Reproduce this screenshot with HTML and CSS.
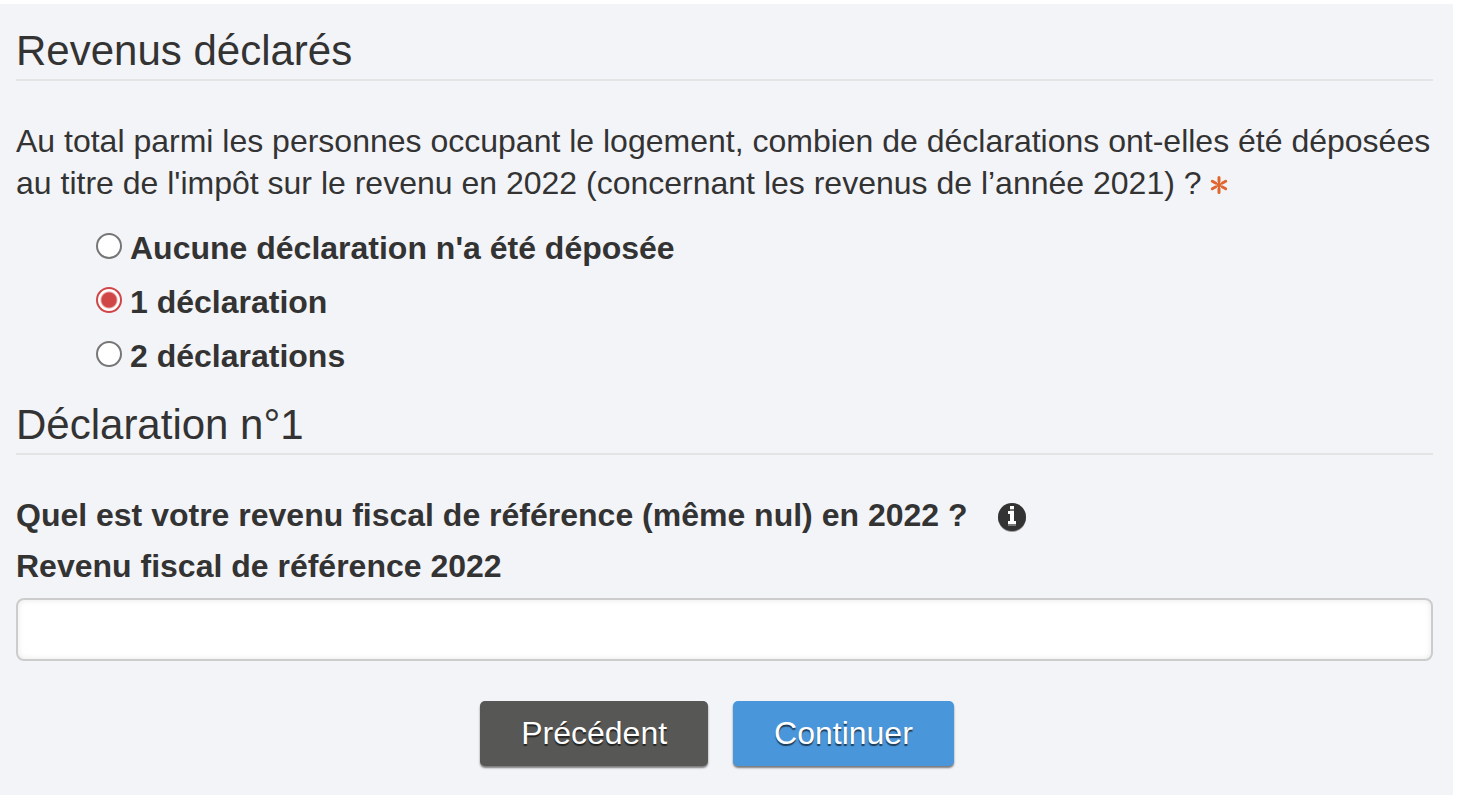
FILE: index.html
```html
<!DOCTYPE html>
<html lang="fr">
<head>
<meta charset="utf-8">
<title>Revenus déclarés</title>
<link rel="stylesheet" href="styles.css">
</head>
<body>
<form class="panel">
  <h2 class="title">Revenus déclarés</h2>
  <fieldset class="question">
    <legend class="prompt">Au total parmi les personnes occupant le logement, combien de déclarations ont-elles été déposées au titre de l'impôt sur le revenu en 2022 (concernant les revenus de l’année 2021) ? <svg class="required" viewBox="0 0 18 18" role="img" aria-label="obligatoire"><path d="M9 1v16M2 5l14 8M2 13l14-8"/><path class="tips" d="M9 1.500v4M9 12.500v4M2.300 5.200l3.200 1.800M15.700 5.200l-3.200 1.800M2.300 12.800l3.200-1.800M15.700 12.800l-3.200-1.800"/></svg></legend>
    <div class="options">
      <label class="option"><input class="radio" type="radio" name="declarations" value="0"><span>Aucune déclaration n'a été déposée</span></label>
      <label class="option"><input class="radio" type="radio" name="declarations" value="1" checked><span>1 déclaration</span></label>
      <label class="option"><input class="radio" type="radio" name="declarations" value="2"><span>2 déclarations</span></label>
    </div>
  </fieldset>
  <h2 class="title">Déclaration n°1</h2>
  <div class="income">
    <p class="income-question">Quel est votre revenu fiscal de référence (même nul) en 2022 ? <button class="info" type="button" aria-label="Information"><svg viewBox="0 0 28 30"><circle class="halo" cx="14" cy="16" r="14"/><circle class="disc" cx="14" cy="15" r="14"/><path class="shade" d="M12 7h4v2h-4zM10 22h8v2h-8z"/><path class="letter" d="M12 4h4v3h-4zM10 9h6v10h2v3h-8v-3h2v-7h-2z"/></svg></button></p>
    <label class="field-label" for="rfr">Revenu fiscal de référence 2022</label>
    <input class="field" id="rfr" type="text">
  </div>
  <div class="actions">
    <button class="btn btn-dark" type="button">Précédent</button>
    <button class="btn btn-blue" type="submit">Continuer</button>
  </div>
</form>
</body>
</html>
```
FILE: styles.css
```css
* { box-sizing: border-box; }
body {
  margin: 0;
  padding: 4px 15px 0 0;
  background: #fff;
  color: #333;
  font: 32px/42px "Liberation Sans", Arial, sans-serif;
}
.panel {
  padding: 20px 20px 29px 16px;
  background: #f3f4f8;
}
.title {
  margin: 0;
  padding-bottom: 2px;
  border-bottom: 2px solid #e3e4e4;
  font-size: 42px;
  line-height: 53px;
  font-weight: 400;
}
.question {
  min-width: 0;
  margin: 39px 0 21px;
  padding: 0;
  border: 0;
}
.prompt { padding: 0; }
.required {
  width: 18px;
  height: 18px;
  vertical-align: 0;
  fill: none;
  stroke: #e0662f;
  stroke-width: 2;
}
.tips {
  stroke-width: 3;
  stroke-linecap: round;
}
.options {
  display: flex;
  flex-direction: column;
  gap: 12px;
  padding: 23px 0 0 80px;
}
.option {
  display: flex;
  align-items: flex-start;
  gap: 8px;
  font-weight: 700;
}
.radio {
  appearance: none;
  width: 26px;
  height: 26px;
  margin: 6px 0 0;
  border: 2px solid #767676;
  border-radius: 50%;
  background: #fff;
}
.radio:checked {
  border-color: #d04545;
  background: radial-gradient(circle, #d04545 7px, #fff 9px);
}
.income { margin-top: 39px; }
.income-question {
  display: flex;
  align-items: center;
  gap: 30px;
  margin: 0;
  font-weight: 700;
}
.info {
  width: 28px;
  height: 34px;
  padding: 4px 0 0;
  border: 0;
  background: none;
}
.info svg { display: block; width: 28px; height: 30px; }
.halo { fill: #999; }
.disc { fill: #333; }
.shade { fill: #777; }
.letter { fill: #fff; }
.field-label {
  display: block;
  margin: 9px 0 11px;
  font-weight: 700;
}
.field {
  display: block;
  width: 100%;
  height: 63px;
  padding: 8px 12px;
  border: 2px solid #ccc;
  border-radius: 8px;
  background: #fff;
  color: #333;
  font: inherit;
  box-shadow: inset 0 0 6px #00000018;
}
.actions {
  display: flex;
  justify-content: center;
  gap: 25px;
  margin-top: 40px;
  padding-right: 15px;
}
.btn {
  height: 65px;
  padding: 0 41px 2px;
  border: 0;
  border-radius: 5px;
  color: #fff;
  font: inherit;
  text-shadow: 0 2px 1px #00000099;
  box-shadow: 0 2px 2px #00000080;
}
.btn-dark { background: #575755; }
.btn-blue { background: #4a96da; }
```
